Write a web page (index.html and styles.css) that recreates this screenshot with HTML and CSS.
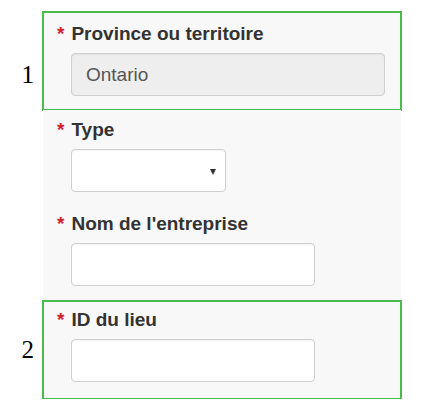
FILE: index.html
```html
<!DOCTYPE html>
<html lang="fr">
<head>
<meta charset="utf-8">
<title>Formulaire</title>
<link rel="stylesheet" href="styles.css">
</head>
<body>
<div class="sheet">
  <div class="marker marker-first">1</div>
  <div class="group group-first boxed">
    <label class="label"><span class="req">*</span>Province ou territoire</label>
    <div class="field field-wide field-disabled">Ontario</div>
  </div>

  <div class="marker"></div>
  <div class="group">
    <label class="label"><span class="req">*</span>Type</label>
    <div class="field field-select"><span class="caret"></span></div>
  </div>

  <div class="marker"></div>
  <div class="group group-third">
    <label class="label"><span class="req">*</span>Nom de l'entreprise</label>
    <div class="field field-mid"></div>
  </div>

  <div class="marker marker-last">2</div>
  <div class="group group-last boxed">
    <label class="label"><span class="req">*</span>ID du lieu</label>
    <div class="field field-mid"></div>
  </div>
</div>
</body>
</html>
```

FILE: styles.css
```css
html, body {
  margin: 0;
  padding: 0;
  background: #ffffff;
}

.sheet {
  display: grid;
  grid-template-columns: 43px 358px;
  margin-top: 12px;
}

.marker {
  font-family: "Liberation Serif", "Times New Roman", serif;
  font-size: 25px;
  line-height: 25px;
  color: #000;
  text-align: right;
  padding-right: 9px;
}

.marker-first {
  padding-top: 50px;
}

.marker-last {
  padding-top: 36px;
}

.group {
  background: #f8f8f8;
  padding: 9px 0 12px 14px;
  display: flex;
  flex-direction: column;
  align-items: flex-start;
}

.group-first {
  padding-top: 11px;
  padding-bottom: 14px;
}

.group-third {
  padding-bottom: 15px;
}

.group-last {
  padding-top: 8px;
  padding-bottom: 17px;
}

.boxed {
  outline: 2px solid #4cbb4c;
  outline-offset: -1px;
}

.label {
  font-family: "Liberation Sans", Arial, sans-serif;
  font-weight: bold;
  font-size: 19px;
  line-height: 22px;
  color: #333333;
  margin-bottom: 8px;
  white-space: nowrap;
}

.req {
  color: #d0202a;
  margin-right: 7px;
}

.field {
  box-sizing: border-box;
  height: 43px;
  margin-left: 14px;
  border: 1px solid #cfcfcf;
  border-radius: 4px;
  background: #ffffff;
  box-shadow: inset 0 1px 1px rgba(0, 0, 0, 0.05);
  font-family: "Liberation Sans", Arial, sans-serif;
  font-size: 19px;
  color: #555555;
  padding: 0 14px;
  display: flex;
  align-items: center;
}

.field-wide {
  width: 314px;
}

.field-mid {
  width: 244px;
}

.field-disabled {
  background: #eeeeee;
}

.field-select {
  width: 155px;
  justify-content: flex-end;
  padding-right: 9px;
}

.caret {
  width: 0;
  height: 0;
  border-left: 3.5px solid transparent;
  border-right: 3.5px solid transparent;
  border-top: 6px solid #333333;
  margin-top: 2px;
}
```
